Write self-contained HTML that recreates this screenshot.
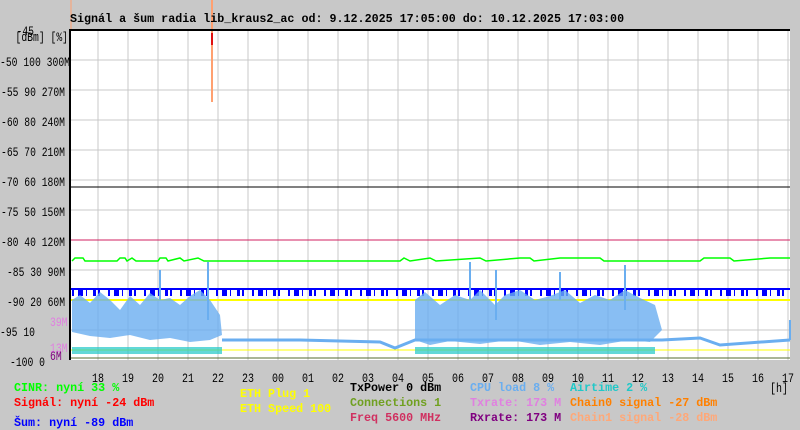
<!DOCTYPE html>
<html><head><meta charset="utf-8"><style>
body{margin:0;background:#c8c8c8;width:800px;height:430px;overflow:hidden}
svg{display:block}
text{font-family:"Liberation Mono",monospace;font-size:11.7px;font-weight:bold}
text.ax{font-size:12.5px;font-weight:normal}
</style></head><body>
<svg width="800" height="430" xmlns="http://www.w3.org/2000/svg">
<rect x="0" y="0" width="800" height="430" fill="#c8c8c8"/>
<rect x="70" y="30" width="720" height="330" fill="#fff"/>
<g stroke="#c8c8c8" stroke-width="1">
<path d="M98 30V360M128 30V360M158 30V360M188 30V360M218 30V360M248 30V360M278 30V360M308 30V360M338 30V360M368 30V360M398 30V360M428 30V360M458 30V360M488 30V360M518 30V360M548 30V360M578 30V360M608 30V360M638 30V360M668 30V360M698 30V360M728 30V360M758 30V360M788 30V360"/>
<path d="M70 60H790M70 90H790M70 120H790M70 150H790M70 180H790M70 210H790M70 240H790M70 270H790M70 300H790M70 330H790"/>
</g>
<line x1="70" y1="187" x2="790" y2="187" stroke="#000"/>
<line x1="70" y1="240" x2="790" y2="240" stroke="#d02060"/>
<polyline fill="none" stroke="#00ff00" stroke-width="1.5" points="72,261 75,258 83,258 85,261 117,261 120,258 125,258 127,261 132,258 136,261 158,261 160,258 166,258 168,261 180,258 184,261 198,258 204,261 400,261 404,258 410,261 430,258 436,261 480,258 486,261 520,258 530,258 534,261 560,258 600,258 604,261 700,261 704,258 730,258 734,261 770,258 790,258"/>
<line x1="70" y1="289" x2="790" y2="289" stroke="#0000ff" stroke-width="2"/>
<line x1="72" y1="293" x2="790" y2="293" stroke="#0000ff" stroke-width="6" stroke-dasharray="2 4 5 3 1 6 3 2 2 8"/>
<line x1="70" y1="300" x2="790" y2="300" stroke="#ffff00" stroke-width="2"/>
<line x1="70" y1="350" x2="790" y2="350" stroke="#ffff00" stroke-width="1"/>
<line x1="70" y1="358" x2="790" y2="358" stroke="#556b2f" stroke-width="1"/>
<g fill="#6aaef0" opacity="0.8">
<polygon points="72,300 80,295 90,303 100,292 110,300 120,310 130,296 140,305 150,293 160,300 170,298 180,305 190,296 200,290 210,300 220,315 222,335 210,340 190,342 170,338 150,340 130,335 110,338 90,336 72,332"/>
<polygon points="415,300 425,292 440,305 455,295 470,300 480,290 495,305 505,295 520,290 535,300 550,296 565,290 580,303 595,295 610,300 625,290 640,298 655,305 662,330 650,342 630,340 600,345 570,342 540,345 510,340 480,344 450,341 430,345 415,340"/>
</g>
<polyline fill="none" stroke="#6aaef0" stroke-width="3" points="222,340 300,340 380,342 395,348 415,340 662,340 700,338 720,345 790,340"/>
<path d="M208 262V320M160 270V300M470 262V300M496 270V320M560 272V300M625 265V310M790 320V340" stroke="#6aaef0" stroke-width="2"/>
<rect x="72" y="347" width="150" height="7" fill="#20c8c8" opacity="0.7"/>
<rect x="415" y="347" width="240" height="7" fill="#20c8c8" opacity="0.7"/>
<line x1="212" y1="0" x2="212" y2="102" stroke="#ffa070" stroke-width="2"/>
<line x1="212" y1="33" x2="212" y2="45" stroke="#e01010" stroke-width="2"/>
<line x1="71" y1="0" x2="71" y2="30" stroke="#ffa070"/>
<path d="M70 360V30H790" fill="none" stroke="#000" stroke-width="2"/>
<text x="70" y="22" fill="#000">Signál a šum radia lib_kraus2_ac od: 9.12.2025 17:05:00 do: 10.12.2025 17:03:00</text>
<g fill="#000" text-anchor="end">
<text class="ax" x="34" y="35" textLength="17.5" lengthAdjust="spacingAndGlyphs">-45</text>
<text class="ax" x="68" y="41" textLength="52.5" lengthAdjust="spacingAndGlyphs">[dBm] [%]</text>
<text class="ax" x="70" y="66" textLength="70" lengthAdjust="spacingAndGlyphs">-50 100 300M</text>
<text class="ax" x="65" y="96" textLength="64" lengthAdjust="spacingAndGlyphs">-55 90 270M</text>
<text class="ax" x="65" y="126" textLength="64" lengthAdjust="spacingAndGlyphs">-60 80 240M</text>
<text class="ax" x="65" y="156" textLength="64" lengthAdjust="spacingAndGlyphs">-65 70 210M</text>
<text class="ax" x="65" y="186" textLength="64" lengthAdjust="spacingAndGlyphs">-70 60 180M</text>
<text class="ax" x="65" y="216" textLength="64" lengthAdjust="spacingAndGlyphs">-75 50 150M</text>
<text class="ax" x="65" y="246" textLength="64" lengthAdjust="spacingAndGlyphs">-80 40 120M</text>
<text class="ax" x="65" y="276" textLength="58" lengthAdjust="spacingAndGlyphs">-85 30 90M</text>
<text class="ax" x="65" y="306" textLength="58" lengthAdjust="spacingAndGlyphs">-90 20 60M</text>
<text class="ax" x="35" y="336" textLength="35" lengthAdjust="spacingAndGlyphs">-95 10</text>
<text class="ax" x="45" y="366" textLength="35" lengthAdjust="spacingAndGlyphs">-100 0</text>
</g>
<text class="ax" x="50" y="326" fill="#e080e0" textLength="17.5" lengthAdjust="spacingAndGlyphs">39M</text>
<text class="ax" x="50" y="352" fill="#e080e0" textLength="17.5" lengthAdjust="spacingAndGlyphs">13M</text>
<text class="ax" x="50" y="360" fill="#800080" textLength="11.7" lengthAdjust="spacingAndGlyphs">6M</text>
<g fill="#000" text-anchor="middle">
<text class="ax" x="98" y="382" textLength="12" lengthAdjust="spacingAndGlyphs">18</text><text class="ax" x="128" y="382" textLength="12" lengthAdjust="spacingAndGlyphs">19</text><text class="ax" x="158" y="382" textLength="12" lengthAdjust="spacingAndGlyphs">20</text><text class="ax" x="188" y="382" textLength="12" lengthAdjust="spacingAndGlyphs">21</text><text class="ax" x="218" y="382" textLength="12" lengthAdjust="spacingAndGlyphs">22</text><text class="ax" x="248" y="382" textLength="12" lengthAdjust="spacingAndGlyphs">23</text><text class="ax" x="278" y="382" textLength="12" lengthAdjust="spacingAndGlyphs">00</text><text class="ax" x="308" y="382" textLength="12" lengthAdjust="spacingAndGlyphs">01</text><text class="ax" x="338" y="382" textLength="12" lengthAdjust="spacingAndGlyphs">02</text><text class="ax" x="368" y="382" textLength="12" lengthAdjust="spacingAndGlyphs">03</text><text class="ax" x="398" y="382" textLength="12" lengthAdjust="spacingAndGlyphs">04</text><text class="ax" x="428" y="382" textLength="12" lengthAdjust="spacingAndGlyphs">05</text><text class="ax" x="458" y="382" textLength="12" lengthAdjust="spacingAndGlyphs">06</text><text class="ax" x="488" y="382" textLength="12" lengthAdjust="spacingAndGlyphs">07</text><text class="ax" x="518" y="382" textLength="12" lengthAdjust="spacingAndGlyphs">08</text><text class="ax" x="548" y="382" textLength="12" lengthAdjust="spacingAndGlyphs">09</text><text class="ax" x="578" y="382" textLength="12" lengthAdjust="spacingAndGlyphs">10</text><text class="ax" x="608" y="382" textLength="12" lengthAdjust="spacingAndGlyphs">11</text><text class="ax" x="638" y="382" textLength="12" lengthAdjust="spacingAndGlyphs">12</text><text class="ax" x="668" y="382" textLength="12" lengthAdjust="spacingAndGlyphs">13</text><text class="ax" x="698" y="382" textLength="12" lengthAdjust="spacingAndGlyphs">14</text><text class="ax" x="728" y="382" textLength="12" lengthAdjust="spacingAndGlyphs">15</text><text class="ax" x="758" y="382" textLength="12" lengthAdjust="spacingAndGlyphs">16</text><text class="ax" x="788" y="382" textLength="12" lengthAdjust="spacingAndGlyphs">17</text>
</g>
<text class="ax" x="770" y="392" fill="#000" textLength="18" lengthAdjust="spacingAndGlyphs">[h]</text>
<text x="14" y="391" fill="#00ff00">CINR: nyní 33 %</text>
<text x="14" y="406" fill="#ff0000">Signál: nyní -24 dBm</text>
<text x="14" y="426" fill="#0000ff">Šum: nyní -89 dBm</text>
<text x="240" y="397" fill="#ffff00">ETH Plug 1</text>
<text x="240" y="412" fill="#ffff00">ETH Speed 100</text>
<text x="350" y="391" fill="#000">TxPower 0 dBm</text>
<text x="350" y="406" fill="#70a020">Connections 1</text>
<text x="350" y="421" fill="#d03060">Freq 5600 MHz</text>
<text x="470" y="391" fill="#6aaef0">CPU load 8 %</text>
<text x="470" y="406" fill="#e080e0">Txrate: 173 M</text>
<text x="470" y="421" fill="#800080">Rxrate: 173 M</text>
<text x="570" y="391" fill="#20c8c8">Airtime 2 %</text>
<text x="570" y="406" fill="#ff8000">Chain0 signal -27 dBm</text>
<text x="570" y="421" fill="#ffa878">Chain1 signal -28 dBm</text>
</svg>
</body></html>
